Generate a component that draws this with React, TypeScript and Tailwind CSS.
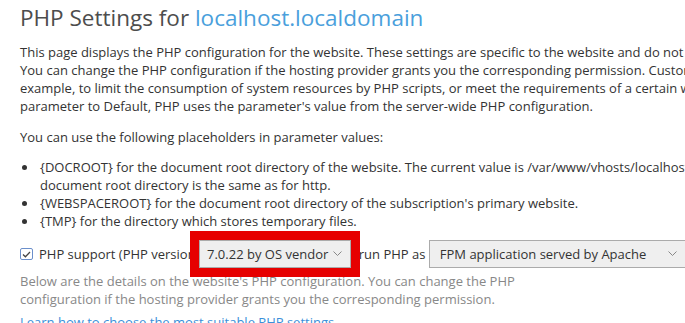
export default function App() {
  return (
    <div className="w-[685px] h-[323px] overflow-hidden bg-white px-[20px] text-[13px] leading-[18px] text-[#333] font-['Open_Sans',sans-serif]">
      <div className="w-[1000px]">
        <h1 className="pt-[3px] text-[22.5px] leading-[30px] font-normal text-[#4d4d4d] whitespace-nowrap">
          PHP Settings for <span className="text-[#4a9fdc]">localhost.localdomain</span>
        </h1>

        <p className="mt-[10px] whitespace-nowrap">
          This page displays the PHP configuration for the website. These settings are specific to the website and do not affect other websites.
          <br />
          You can change the PHP configuration if the hosting provider grants you the corresponding permission. Customizing PHP settings might be necessary, for
          <br />
          example, to limit the consumption of system resources by PHP scripts, or meet the requirements of a certain web application. If you set a
          <br />
          parameter to Default, PHP uses the parameter's value from the server-wide PHP configuration.
        </p>

        <p className="mt-[13px] whitespace-nowrap">You can use the following placeholders in parameter values:</p>

        <ul className="mt-[12px] whitespace-nowrap">
          <li className="flex">
            <span className="w-[20px] shrink-0 flex pt-[7px]">
              <span className="ml-[2px] w-[5px] h-[5px] rounded-full bg-[#333]" />
            </span>
            <span>
              {'{DOCROOT}'} for the document root directory of the website. The current value is /var/www/vhosts/localhost.localdomain/httpdocs. For https, the
              <br />
              document root directory is the same as for http.
            </span>
          </li>
          <li className="flex">
            <span className="w-[20px] shrink-0 flex pt-[7px]">
              <span className="ml-[2px] w-[5px] h-[5px] rounded-full bg-[#333]" />
            </span>
            <span>{'{WEBSPACEROOT}'} for the document root directory of the subscription's primary website.</span>
          </li>
          <li className="flex">
            <span className="w-[20px] shrink-0 flex pt-[7px]">
              <span className="ml-[2px] w-[5px] h-[5px] rounded-full bg-[#333]" />
            </span>
            <span>{'{TMP}'} for the directory which stores temporary files.</span>
          </li>
        </ul>

        <div className="mt-[10px] flex items-center h-[28px] whitespace-nowrap">
          <span className="w-[13px] h-[12px] border border-[#6b8fcb] rounded-[2px] flex items-center justify-center bg-white">
            <svg width="9" height="7" viewBox="0 0 9 7" fill="none">
              <path d="M1 3.5 L3.4 5.8 L8 1" stroke="#444" strokeWidth="1.3" />
            </svg>
          </span>
          <span className="ml-[6px]">PHP support (PHP version&nbsp;</span>
          <div className="relative z-10 w-[152px] h-[28px] border border-[#ababab] bg-[#efefef] flex items-center pl-[7px] pr-[8px] outline-[9px] outline-solid outline-[#e60000] text-[#333]">
            <span className="flex-1">7.0.22 by OS vendor</span>
            <svg width="9" height="6" viewBox="0 0 9 6" fill="none">
              <path d="M0.5 0.5 L4.5 4.5 L8.5 0.5" stroke="#888" strokeWidth="1" />
            </svg>
          </div>
          <span className="ml-[1px]">, run PHP as&nbsp;</span>
          <div className="w-[257px] h-[28px] border border-[#ababab] bg-[#efefef] flex items-center pl-[10px] pr-[8px] text-[#333]">
            <span className="flex-1">FPM application served by Apache</span>
            <svg width="9" height="6" viewBox="0 0 9 6" fill="none">
              <path d="M0.5 0.5 L4.5 4.5 L8.5 0.5" stroke="#888" strokeWidth="1" />
            </svg>
          </div>
        </div>

        <p className="mt-[4px] text-[#888] whitespace-nowrap">
          Below are the details on the website's PHP configuration. You can change the PHP
          <br />
          configuration if the hosting provider grants you the corresponding permission.
        </p>

        <p className="mt-[5px]">
          <a className="text-[#3b8fd9] whitespace-nowrap">Learn how to choose the most suitable PHP settings</a>
        </p>
      </div>
    </div>
  );
}
